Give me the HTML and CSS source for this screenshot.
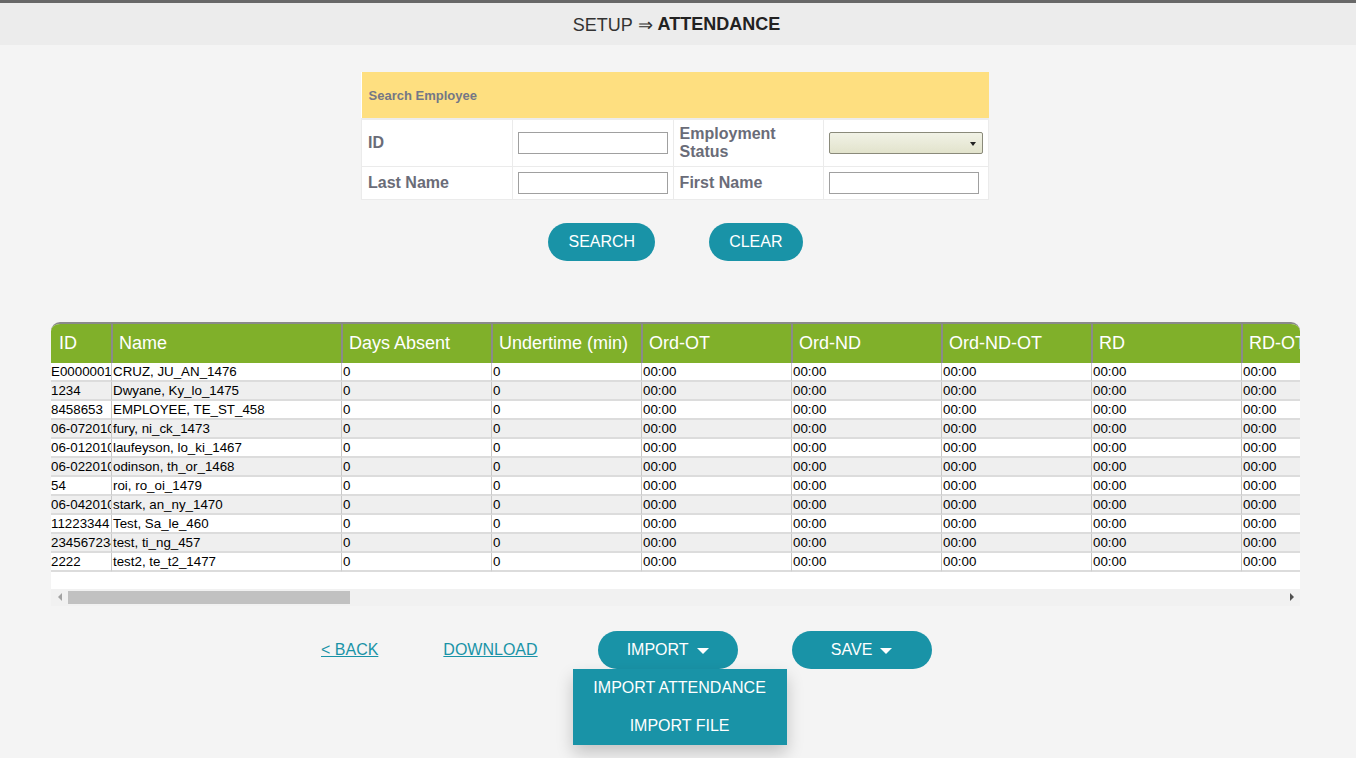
FILE: index.html
```html
<!DOCTYPE html>
<html>
<head>
<meta charset="utf-8">
<link rel="stylesheet" href="styles.css">
</head>
<body>
<div class="topbar">SETUP ⇒&nbsp;<b>ATTENDANCE</b></div>

<table class="search">
  <tr class="head"><td colspan="4">Search Employee</td></tr>
  <tr class="r1">
    <td class="lbl c1">ID</td>
    <td class="c2"><input type="text" class="inp"></td>
    <td class="lbl c3">Employment Status</td>
    <td class="c4"><div class="sel"><span class="arrow"></span></div></td>
  </tr>
  <tr class="r2">
    <td class="lbl">Last Name</td>
    <td><input type="text" class="inp"></td>
    <td class="lbl">First Name</td>
    <td><input type="text" class="inp"></td>
  </tr>
</table>

<div class="btnrow">
  <button class="btn">SEARCH</button>
  <button class="btn">CLEAR</button>
</div>

<div class="grid">
  <table class="att">
    <thead>
      <tr>
        <th class="w-id">ID</th>
        <th class="w-name">Name</th>
        <th class="w">Days Absent</th>
        <th class="w">Undertime (min)</th>
        <th class="w">Ord-OT</th>
        <th class="w">Ord-ND</th>
        <th class="w">Ord-ND-OT</th>
        <th class="w">RD</th>
        <th class="w">RD-OT</th>
        <th class="w">RD-ND</th>
      </tr>
    </thead>
    <tbody id="rows"></tbody>
  </table>
  <div class="spacer"></div>
  <div class="hscroll">
    <div class="sarrow left"></div>
    <div class="track"><div class="thumb"></div></div>
    <div class="sarrow right"></div>
  </div>
</div>

<div class="actions">
  <a class="lnk back" href="#">&lt; BACK</a>
  <a class="lnk download" href="#">DOWNLOAD</a>
  <div class="dd import">
    <button class="btn wide">IMPORT <span class="caret"></span></button>
    <div class="menu">
      <div class="item">IMPORT ATTENDANCE</div>
      <div class="item">IMPORT FILE</div>
    </div>
  </div>
  <div class="dd save">
    <button class="btn wide">SAVE <span class="caret"></span></button>
  </div>
</div>

<script src="app.js"></script>
</body>
</html>
```

FILE: app.js
```js
var data = [
  ["E0000001", "CRUZ, JU_AN_1476"],
  ["1234", "Dwyane, Ky_lo_1475"],
  ["8458653", "EMPLOYEE, TE_ST_458"],
  ["06-072010", "fury, ni_ck_1473"],
  ["06-012010", "laufeyson, lo_ki_1467"],
  ["06-022010", "odinson, th_or_1468"],
  ["54", "roi, ro_oi_1479"],
  ["06-042010", "stark, an_ny_1470"],
  ["11223344", "Test, Sa_le_460"],
  ["234567234", "test, ti_ng_457"],
  ["2222", "test2, te_t2_1477"]
];
var tb = document.getElementById("rows");
data.forEach(function (r) {
  var tr = document.createElement("tr");
  var cells = [r[0], r[1], "0", "0", "00:00", "00:00", "00:00", "00:00", "00:00", "00:00"];
  cells.forEach(function (c) {
    var td = document.createElement("td");
    td.textContent = c;
    tr.appendChild(td);
  });
  tb.appendChild(tr);
});
```

FILE: styles.css
```css
* { box-sizing: border-box; }
html, body { min-height: 100%; }
body {
  margin: 0;
  min-height: 758px;
  background: #f4f4f4;
  font-family: "Liberation Sans", Arial, sans-serif;
}
.topbar {
  border-top: 3px solid #686868;
  background: #ececec;
  height: 45px;
  display: flex;
  align-items: center;
  justify-content: center;
  font-size: 18px;
  color: #333;
  padding-top: 1px;
  padding-right: 3px;
}
.topbar b { color: #222; }

.search {
  width: 628px;
  margin: 27px 0 0 361px;
  border-collapse: collapse;
  background: #fff;
}
.search td {
  border: 1px solid #ebebeb;
  padding: 0 5px;
  vertical-align: middle;
}
.search .head td {
  background: #fedf80;
  height: 47px;
  padding: 0 7px;
  font-size: 13px;
  font-weight: bold;
  color: #747786;
  border: none;
  border-bottom: 2px solid #ececec;
}
.search .r1 td { height: 47px; }
.search .r2 td { height: 33px; }
.search .c1 { width: 152px; }
.search .c2 { width: 161px; }
.search .c3 { width: 151px; }
.search .c4 { width: 164px; }
.search .lbl {
  font-size: 16px;
  font-weight: bold;
  color: #6a6c78;
  line-height: 18px;
  padding-left: 6px;
}
.inp {
  display: block;
  width: 150px;
  height: 22px;
  border: 1px solid #a0a0a0;
  background: #fff;
  margin: 0;
  padding: 0 2px;
  font: 13px "Liberation Sans", Arial, sans-serif;
}
.sel {
  position: relative;
  width: 154px;
  height: 22px;
  border: 1px solid #8a8a7a;
  border-radius: 2px;
  background: linear-gradient(#f1f2e6, #e2e3cc);
}
.sel .arrow {
  position: absolute;
  right: 6px;
  top: 9px;
  border-left: 3.5px solid transparent;
  border-right: 3.5px solid transparent;
  border-top: 4px solid #222;
}

.btnrow {
  display: flex;
  justify-content: center;
  gap: 54px;
  margin-top: 23px;
  padding-right: 5px;
}
.btn {
  height: 38px;
  border: none;
  border-radius: 19px;
  background: #1993a7;
  color: #fff;
  font: 16px "Liberation Sans", Arial, sans-serif;
  padding: 0 20px;
  display: inline-flex;
  align-items: center;
  justify-content: center;
  cursor: pointer;
}

.grid {
  margin: 61px 0 0 51px;
  width: 1249px;
  border-top: 2px solid #8a8a8a;
  border-radius: 9px 9px 0 0;
  overflow: hidden;
  background: #fff;
}
.att {
  border-collapse: separate;
  border-spacing: 0;
  table-layout: fixed;
  width: 1490px;
}
.att th {
  background: #80b02a;
  color: #fff;
  font-weight: normal;
  font-size: 18px;
  text-align: left;
  height: 39px;
  padding: 0 0 0 6px;
  border-left: 2px solid #8a8a8a;
  white-space: nowrap;
  overflow: hidden;
}
.att th:first-child { border-left: none; padding-left: 8px; }
.att .w-id { width: 60px; }
.att .w-name { width: 230px; }
.att .w { width: 150px; }
.att td {
  height: 19px;
  padding: 0 0 0 1px;
  font-size: 13.33px;
  line-height: 17px;
  color: #000;
  border-left: 1px solid #c8c8c8;
  border-bottom: 2px solid #dcdcdc;
  white-space: nowrap;
  overflow: hidden;
  background: #fff;
}
.att td:first-child { border-left: none; padding-left: 0; }
.att tbody tr:nth-child(even) td { background: #efefef; }

.spacer { height: 17px; background: #fff; }
.hscroll {
  height: 17px;
  display: flex;
  background: #f1f1f1;
}
.sarrow {
  width: 17px;
  height: 17px;
  display: flex;
  align-items: center;
  justify-content: center;
}
.sarrow::before {
  content: "";
  border-top: 4px solid transparent;
  border-bottom: 4px solid transparent;
}
.sarrow.left::before { border-right: 4px solid #a3a3a3; }
.sarrow.right::before { border-left: 4px solid #505050; }
.track { flex: 1; padding-top: 2px; }
.thumb {
  width: 282px;
  height: 13px;
  background: #c1c1c1;
}

.actions {
  display: flex;
  align-items: center;
  margin-top: 25px;
  padding-left: 321px;
  padding-bottom: 90px;
}
.lnk {
  color: #1993a7;
  font-size: 16px;
  text-decoration: underline;
}
.download { margin-left: 65px; }
.dd { position: relative; height: 38px; }
.import { margin-left: 60px; }
.save { margin-left: 54px; }
.btn.wide { width: 140px; padding: 0; }
.caret {
  display: inline-block;
  margin-left: 8px;
  margin-top: 2px;
  border-left: 6px solid transparent;
  border-right: 6px solid transparent;
  border-top: 6px solid #fff;
}
.menu {
  position: absolute;
  z-index: 10;
  top: 38px;
  left: -25px;
  width: 214px;
  height: 76px;
  background: #1993a7;
  box-shadow: 0 8px 16px rgba(0, 0, 0, 0.2);
}
.menu .item {
  display: block;
  height: 38px;
  line-height: 38px;
  text-align: center;
  color: #fff;
  font-size: 16px;
}
```
